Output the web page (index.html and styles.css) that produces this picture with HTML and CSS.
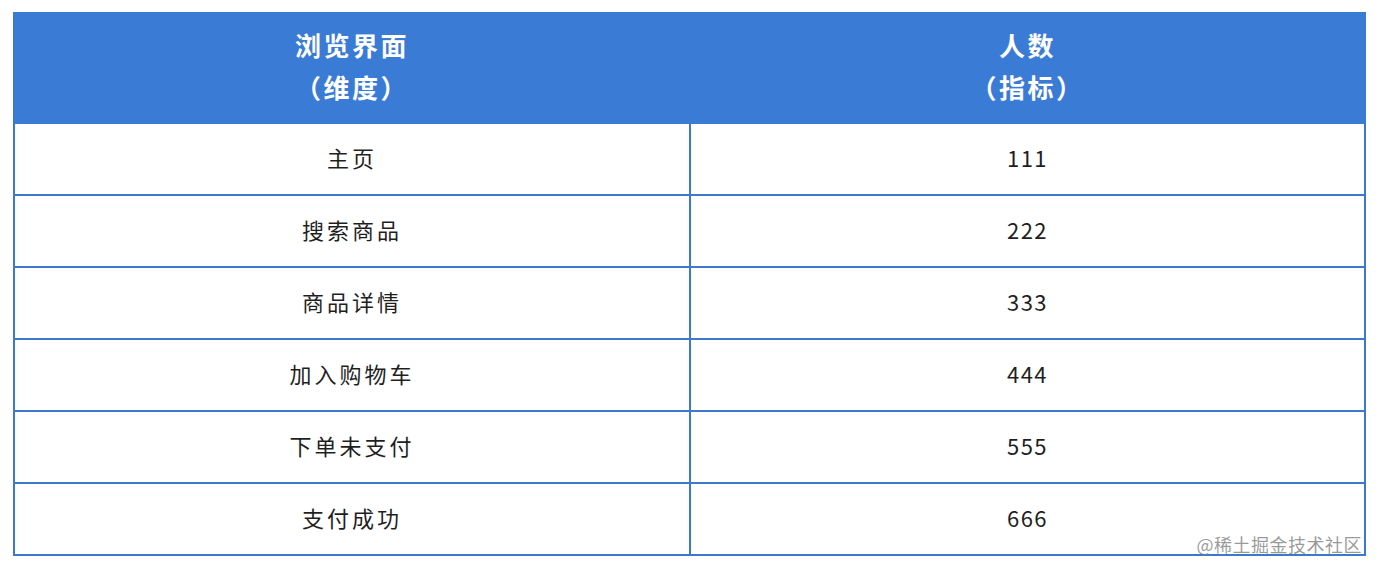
FILE: index.html
```html
<!DOCTYPE html>
<html lang="zh">
<head>
<meta charset="utf-8">
<title>浏览界面 人数</title>
<link rel="stylesheet" href="styles.css">
</head>
<body>
<div class="page">
  <table class="data">
    <colgroup>
      <col class="col-a">
      <col class="col-b">
    </colgroup>
    <thead>
      <tr>
        <th>浏览界面<br>（维度）</th>
        <th>人数<br>（指标）</th>
      </tr>
    </thead>
    <tbody>
      <tr><td>主页</td><td class="num">111</td></tr>
      <tr><td>搜索商品</td><td class="num">222</td></tr>
      <tr><td>商品详情</td><td class="num">333</td></tr>
      <tr><td>加入购物车</td><td class="num">444</td></tr>
      <tr><td>下单未支付</td><td class="num">555</td></tr>
      <tr><td>支付成功</td><td class="num">666</td></tr>
    </tbody>
  </table>
  <div class="watermark">@稀土掘金技术社区</div>
</div>
</body>
</html>
```
FILE: styles.css
```css
* { box-sizing: border-box; }
html, body {
  margin: 0;
  background: #ffffff;
}
body {
  font-family: "Noto Sans CJK SC", "Noto Sans", sans-serif;
  color: #1f1f1f;
}
.page {
  position: relative;
  width: 1378px;
  height: 572px;
  padding: 12px 0 0 13px;
}
.data {
  border-collapse: separate;
  border-spacing: 0;
  table-layout: fixed;
  width: 1353px;
}
.col-a { width: 678px; }
.col-b { width: 675px; }
.data th,
.data td {
  border-right: 2px solid #3b79cf;
  border-bottom: 2px solid #3b79cf;
  text-align: center;
  vertical-align: middle;
  padding: 0;
}
.data th:first-child,
.data td:first-child {
  border-left: 2px solid #3b79cf;
}
.data th {
  background: #3a7bd6;
  border-color: #3a7bd6;
  color: #ffffff;
  font-weight: 700;
  font-size: 26px;
  letter-spacing: 2.5px;
  line-height: 42px;
  height: 112px;
  padding-bottom: 2px;
}
.data td {
  height: 72px;
  font-size: 22px;
  letter-spacing: 3px;
  line-height: 30px;
  padding-bottom: 4px;
}
.data td.num {
  font-size: 22px;
  letter-spacing: 1.5px;
}
.watermark {
  position: absolute;
  right: 16px;
  top: 532px;
  font-size: 18px;
  line-height: 24px;
  color: rgba(120, 120, 120, 0.75);
  letter-spacing: 0.5px;
}
```
